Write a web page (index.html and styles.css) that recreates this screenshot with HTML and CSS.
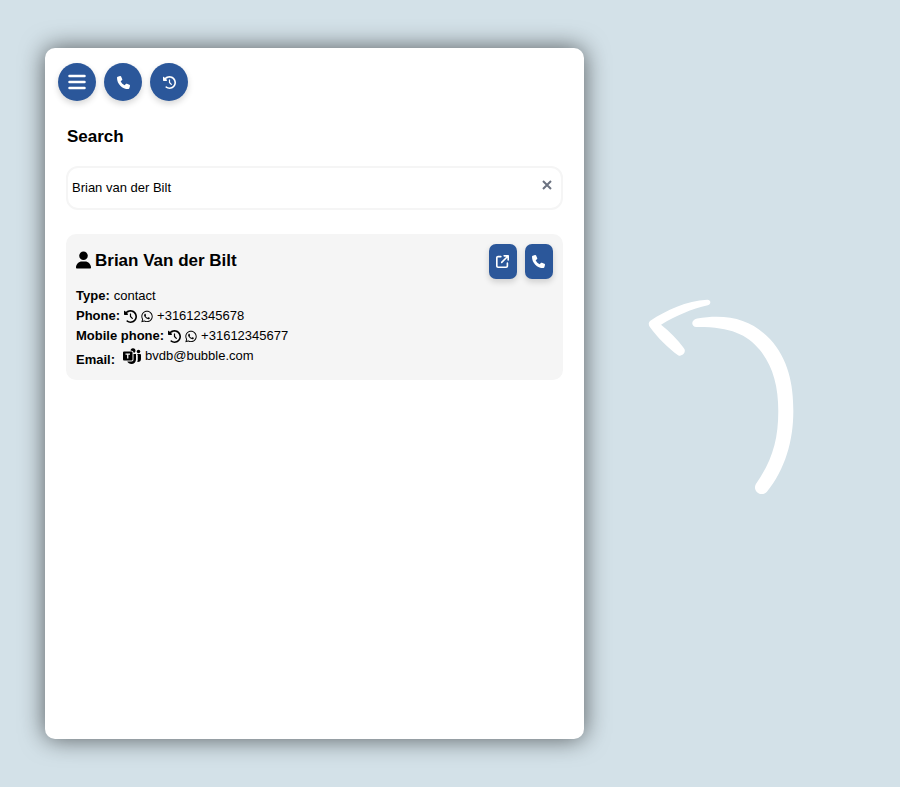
FILE: index.html
```html
<!DOCTYPE html>
<html lang="en">
<head>
    <meta charset="UTF-8">
    <meta name="viewport" content="width=device-width, initial-scale=1.0">
    <title>Search</title>
    <link rel="stylesheet" href="styles.css">
</head>
<body>
    <svg class="sprite" aria-hidden="true">
        <symbol id="icon-phone" viewBox="0 0 512 512">
            <path d="M164.900 24.600c-7.700-18.600-28-28.500-47.400-23.200l-88 24C12.100 30.200 0 46 0 64C0 311.400 200.600 512 448 512c18 0 33.800-12.100 38.600-29.500l24-88c5.300-19.400-4.600-39.700-23.200-47.400l-96-40c-16.300-6.800-35.200-2.100-46.300 11.600L304.700 368C234.300 334.700 177.300 277.700 144 207.300L193.300 167c13.700-11.200 18.400-30 11.600-46.300l-40-96z"/>
        </symbol>
        <symbol id="icon-history" viewBox="0 0 512 512">
            <path d="M75 75L41 41C25.900 25.900 0 36.600 0 57.900V168c0 13.300 10.700 24 24 24H134.100c21.400 0 32.100-25.900 17-41l-30.800-30.800C155 85.500 203 64 256 64c106 0 192 86 192 192s-86 192-192 192c-40.800 0-78.600-12.700-109.700-34.400c-14.500-10.100-34.400-6.600-44.600 7.900s-6.600 34.400 7.900 44.600C151.200 495 201.700 512 256 512c141.400 0 256-114.600 256-256S397.400 0 256 0C185.300 0 121.300 28.700 75 75zm181 53c-13.300 0-24 10.700-24 24V256c0 6.400 2.500 12.500 7 17l72 72c9.400 9.400 24.600 9.400 33.900 0s9.400-24.600 0-33.900l-65-65V152c0-13.300-10.700-24-24-24z"/>
        </symbol>
        <symbol id="icon-whatsapp" viewBox="0 0 448 512">
            <path d="M380.900 97.100C339 55.100 283.200 32 223.900 32c-122.400 0-222 99.600-222 222 0 39.100 10.200 77.300 29.600 111L0 480l117.700-30.900c32.400 17.700 68.900 27 106.100 27h.1c122.300 0 224.100-99.600 224.100-222 0-59.300-25.200-115-67.100-157zm-157 341.600c-33.200 0-65.700-8.900-94-25.700l-6.700-4-69.800 18.300L72 359.200l-4.400-7c-18.500-29.400-28.200-63.300-28.200-98.200 0-101.700 82.800-184.500 184.600-184.500 49.300 0 95.600 19.200 130.400 54.100 34.800 34.900 56.200 81.200 56.100 130.500 0 101.800-84.900 184.600-186.600 184.600zm101.200-138.200c-5.500-2.800-32.800-16.200-37.900-18-5.100-1.900-8.800-2.800-12.500 2.800-3.700 5.600-14.300 18-17.600 21.800-3.200 3.700-6.500 4.200-12 1.400-32.600-16.300-54-29.100-75.500-66-5.700-9.800 5.700-9.100 16.300-30.300 1.800-3.700.9-6.900-.5-9.700-1.400-2.800-12.500-30.100-17.100-41.200-4.500-10.800-9.100-9.300-12.500-9.500-3.200-.2-6.900-.2-10.600-.2-3.700 0-9.700 1.400-14.800 6.900-5.100 5.600-19.400 19-19.400 46.300 0 27.300 19.900 53.700 22.600 57.400 2.800 3.700 39.100 59.700 94.800 83.800 35.200 15.200 49 16.500 66.600 13.900 10.700-1.600 32.800-13.400 37.400-26.400 4.600-13 4.600-24.100 3.200-26.400-1.300-2.500-5-3.900-10.500-6.600z"/>
        </symbol>
    </svg>

    <main class="page">
        <section class="panel">
            <nav class="toolbar">
                <button class="round-btn" type="button" aria-label="Menu">
                    <svg class="icon-menu" viewBox="0 0 18 16"><path d="M1.500 2h15M1.500 8h15M1.500 14h15"/></svg>
                </button>
                <button class="round-btn" type="button" aria-label="Call">
                    <svg class="icon"><use href="#icon-phone"/></svg>
                </button>
                <button class="round-btn" type="button" aria-label="History">
                    <svg class="icon"><use href="#icon-history"/></svg>
                </button>
            </nav>

            <div class="content">
                <h1><label for="search">Search</label></h1>
                <div class="search-box">
                    <input id="search" type="text" value="Brian van der Bilt">
                    <button class="clear-btn" type="button" aria-label="Clear">
                        <svg viewBox="0 0 10 10"><path d="M1 1l8 8M9 1l-8 8"/></svg>
                    </button>
                </div>

                <article class="card">
                    <div class="card-header">
                        <svg class="icon-user" viewBox="0 0 448 512"><path d="M224 256A128 128 0 1 0 224 0a128 128 0 1 0 0 256zm-45.700 48C79.800 304 0 383.800 0 482.300C0 498.700 13.300 512 29.700 512H418.300c16.400 0 29.700-13.300 29.700-29.700C448 383.800 368.200 304 269.700 304H178.300z"/></svg>
                        <h2>Brian Van der Bilt</h2>
                        <div class="actions">
                            <button class="card-btn" type="button" aria-label="Open contact">
                                <svg class="icon" viewBox="0 0 512 512"><path d="M320 0c-17.700 0-32 14.300-32 32s14.300 32 32 32h82.700L201.400 265.400c-12.500 12.500-12.500 32.800 0 45.300s32.800 12.500 45.300 0L448 109.300V192c0 17.700 14.300 32 32 32s32-14.300 32-32V32c0-17.700-14.300-32-32-32H320zM80 32C35.800 32 0 67.800 0 112V432c0 44.200 35.800 80 80 80H400c44.200 0 80-35.800 80-80V320c0-17.700-14.300-32-32-32s-32 14.300-32 32V432c0 8.800-7.200 16-16 16H80c-8.800 0-16-7.200-16-16V112c0-8.800 7.200-16 16-16H192c17.700 0 32-14.300 32-32s-14.300-32-32-32H80z"/></svg>
                            </button>
                            <button class="card-btn" type="button" aria-label="Call contact">
                                <svg class="icon"><use href="#icon-phone"/></svg>
                            </button>
                        </div>
                    </div>

                    <div class="row">
                        <strong>Type:</strong>
                        <span>contact</span>
                    </div>
                    <div class="row">
                        <strong>Phone:</strong>
                        <svg class="icon"><use href="#icon-history"/></svg>
                        <svg class="icon-whatsapp"><use href="#icon-whatsapp"/></svg>
                        <span>+31612345678</span>
                    </div>
                    <div class="row">
                        <strong>Mobile phone:</strong>
                        <svg class="icon"><use href="#icon-history"/></svg>
                        <svg class="icon-whatsapp"><use href="#icon-whatsapp"/></svg>
                        <span>+31612345677</span>
                    </div>
                    <div class="row email">
                        <strong>Email:</strong>
                        <div class="email-value">
                            <svg class="icon-teams" viewBox="0 0 36 32">
                                <path fill-rule="evenodd" d="M2 7h15a2 2 0 0 1 2 2v14a2 2 0 0 1-2 2H2a2 2 0 0 1-2-2V9a2 2 0 0 1 2-2zM5 11v2.500h3.200V21h2.600v-7.500H14V11z"/>
                                <path d="M15 5a5 5 0 1 1 8 4.500l-2-.5a4 4 0 0 0-3-3.500z"/>
                                <path d="M21 12h5v11c0 5-4 9-9 9-4 0-7-2-8.500-5H17c2.500 0 4-1.500 4-4z"/>
                                <circle cx="31" cy="7" r="3.500"/>
                                <path d="M28 12h6a2 2 0 0 1 2 2v8c0 4-3 6.500-7.500 6 .7-1.500 1-3 1-5V14z"/>
                            </svg>
                            <span>bvdb@bubble.com</span>
                        </div>
                    </div>
                </article>
            </div>
        </section>

        <div class="pointer">
            <svg class="arrow" viewBox="55 52 440 592" aria-hidden="true">
                <path d="M232 57C170 60 110 88 62 120C56 124 56 132 60 138C85 172 115 202 145 223C157 230 172 213 162 202C143 176 122 154 94 132C140 105 185 85 234 74C246 70 243 56 232 57z"/>
                <path d="M202 113C300 98 365 118 420 175C475 235 490 310 490 390C490 480 465 565 411 632C395 650 366 630 378 609C425 540 445 480 445 390C445 315 428 255 390 208C350 160 300 138 200 139C183 137 183 117 202 113z"/>
            </svg>
        </div>
    </main>
</body>
</html>
```
FILE: styles.css
```css
* {
    box-sizing: border-box;
}
body {
    margin: 0;
    font-family: "Liberation Sans", Arial, sans-serif;
    font-size: 13px;
    line-height: 20px;
    color: #000;
    background: #d3e1e8;
}
button {
    display: flex;
    align-items: center;
    justify-content: center;
    padding: 0;
    border: none;
    cursor: pointer;
}
svg {
    fill: currentColor;
    flex-shrink: 0;
}
.sprite {
    display: none;
}
.page {
    display: grid;
    grid-template-columns: 2fr 1fr;
    gap: 2px;
    min-height: 100vh;
    padding: 48px 45px;
}
.panel {
    background: #fff;
    border-radius: 10px;
    box-shadow: 0 0 24px rgba(0, 0, 0, 0.6);
}

/* Top buttons */
.toolbar {
    display: flex;
    gap: 8px;
    padding: 15px 13px;
}
.round-btn, .card-btn {
    color: #fff;
    background: #2b579a;
    box-shadow: 0 3px 6px rgba(0, 0, 0, 0.16);
}
.round-btn {
    width: 38px;
    height: 38px;
    border-radius: 50%;
}
.icon {
    width: 13px;
    height: 13px;
}
.icon-menu {
    width: 18px;
    height: 16px;
    stroke: currentColor;
    stroke-width: 2.5;
    stroke-linecap: round;
}

/* Search */
.content {
    padding: 8px 21px;
}
h1, h2 {
    margin: 0;
    font-size: 17px;
}
h1 {
    line-height: 26px;
    margin-bottom: 16px;
    padding-left: 1px;
}
.search-box {
    display: flex;
    height: 44px;
    margin-bottom: 24px;
    border: 2px solid #f5f5f5;
    border-radius: 12px;
}
.search-box input {
    flex: 1;
    min-width: 0;
    padding: 0 4px;
    border: none;
    outline: none;
    background: none;
    font: inherit;
    color: inherit;
}
.clear-btn {
    width: 28px;
    height: 34px;
    color: #6b7280;
    background: none;
}
.clear-btn svg {
    width: 10px;
    height: 10px;
    stroke: currentColor;
    stroke-width: 2;
}

/* Contact card */
.card {
    padding: 10px;
    background: #f5f5f5;
    border-radius: 10px;
}
.card-header {
    display: flex;
    gap: 4px;
    margin-bottom: 7px;
}
.card-header h2 {
    flex: 1;
    line-height: 34px;
}
.icon-user {
    width: 15px;
    height: 32px;
}
.actions {
    display: flex;
    gap: 8px;
}
.card-btn {
    width: 28px;
    height: 35px;
    border-radius: 7px;
}
.row {
    display: flex;
    align-items: center;
    gap: 4px;
}
.icon-whatsapp {
    width: 12px;
    height: 13px;
}
.email {
    gap: 8px;
    height: 24px;
    align-items: flex-end;
}
.email-value {
    display: flex;
    align-items: center;
    align-self: flex-start;
    gap: 4px;
}
.icon-teams {
    width: 18px;
    height: 16px;
}

/* Arrow beside the panel */
.pointer {
    display: flex;
    align-items: center;
    justify-content: center;
    padding: 6px 0 0 2px;
}
.arrow {
    width: 147px;
    color: #fff;
}
```
